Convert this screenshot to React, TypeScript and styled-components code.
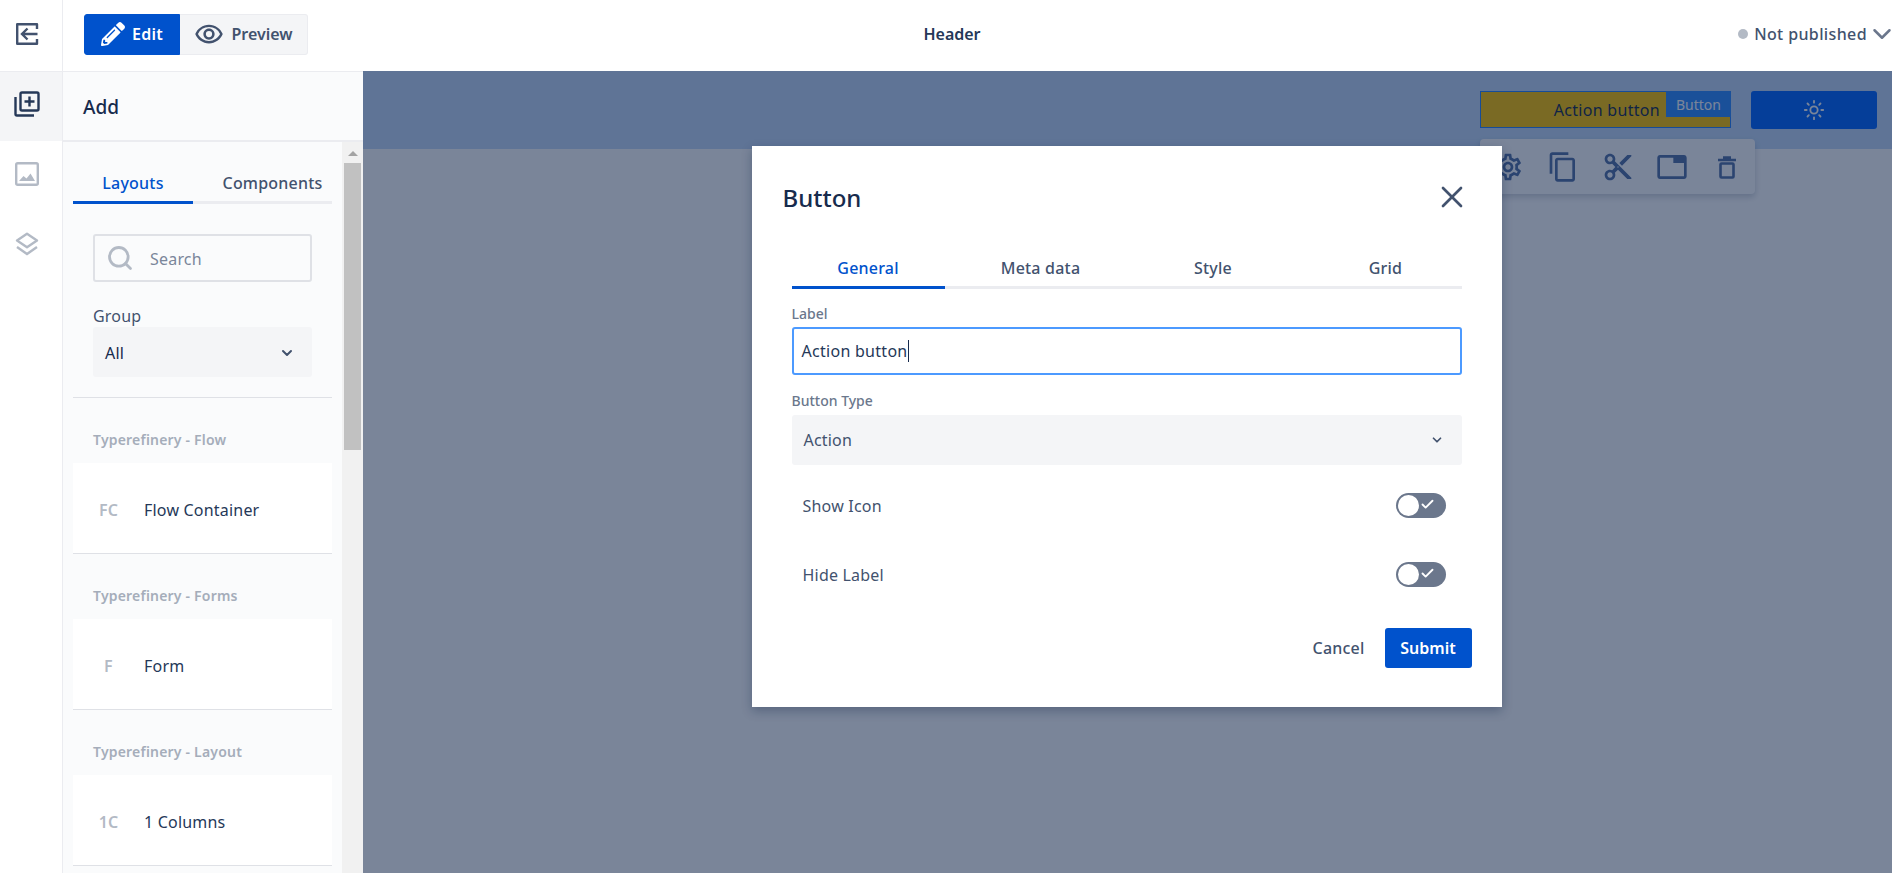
import { ReactNode } from "react";
import styled, { createGlobalStyle } from "styled-components";
import { Check, ChevronDown, Search, Sun, X } from "lucide-react";
import { FaPencilAlt } from "react-icons/fa";
import {
  MdContentCopy,
  MdOutlineContentCut,
  MdOutlineRemoveRedEye,
  MdOutlineSettings,
  MdOutlineTab,
} from "react-icons/md";

const GlobalStyle = createGlobalStyle`
  html, body {
    margin: 0;
    padding: 0;
    height: 100%;
    overflow: hidden;
  }
  * {
    box-sizing: border-box;
  }
  body {
    font-family: "Noto Sans", "Open Sans", sans-serif;
    letter-spacing: 0.2px;
    color: #253858;
    background: #fff;
  }
`;

const Page = styled.div`
  display: flex;
  width: 1892px;
  height: 873px;
  overflow: hidden;
`;

/* left icon rail */
const Rail = styled.nav`
  width: 63px;
  flex-shrink: 0;
  display: flex;
  flex-direction: column;
  border-right: 1px solid #ebecf0;
  background: #fff;
`;
const RailItem = styled.div<{ $active?: boolean; $height: number; $lift: number }>`
  height: ${(p) => p.$height}px;
  display: flex;
  align-items: center;
  justify-content: center;
  padding: 0 9px ${(p) => p.$lift}px 0;
  background: ${(p) => (p.$active ? "#f4f5f7" : "transparent")};
`;
const RailHome = styled(RailItem)`
  border-bottom: 1px solid #ebecf0;
`;

const Main = styled.div`
  flex: 1;
  min-width: 0;
  display: flex;
  flex-direction: column;
`;

/* top bar */
const TopBar = styled.header`
  height: 71px;
  flex-shrink: 0;
  display: grid;
  grid-template-columns: 1fr auto 1fr;
  align-items: center;
  padding: 0 4px 3px 21px;
`;
const ModeSwitch = styled.div`
  display: flex;
  height: 41px;
`;
const ModeButton = styled.div<{ $active?: boolean }>`
  display: flex;
  align-items: center;
  justify-content: center;
  gap: 7px;
  font-size: 16px;
  font-weight: 600;
  letter-spacing: ${(p) => (p.$active ? 0.3 : 0)}px;
  width: ${(p) => (p.$active ? 96 : 128)}px;
  color: ${(p) => (p.$active ? "#fff" : "#42526e")};
  background: ${(p) => (p.$active ? "#0052cc" : "#f4f5f7")};
  border: 1px solid ${(p) => (p.$active ? "#0052cc" : "#ebecf0")};
  border-left-width: ${(p) => (p.$active ? 1 : 0)}px;
  border-radius: ${(p) => (p.$active ? "3px 0 0 3px" : "0 3px 3px 0")};
`;
const PageName = styled.div`
  font-size: 16px;
  font-weight: 600;
  letter-spacing: 0;
  color: #253858;
  margin-right: 68px;
`;
const Publish = styled.div`
  justify-self: end;
  display: flex;
  align-items: center;
  gap: 6px;
  font-size: 16px;
  font-weight: 500;
  letter-spacing: 0.38px;
  color: #42526e;
`;
const Dot = styled.span`
  width: 10px;
  height: 10px;
  border-radius: 50%;
  background: #b3bac5;
`;
const PublishChevron = styled(ChevronDown)`
  margin: 0 -9px 0 -6px;
  color: #6b778c;
`;

const Workspace = styled.div`
  flex: 1;
  min-height: 0;
  display: flex;
`;

/* add panel */
const Panel = styled.aside`
  width: 300px;
  flex-shrink: 0;
  display: flex;
  flex-direction: column;
  background: #fafbfc;
`;
const PanelHeader = styled.div`
  height: 71px;
  flex-shrink: 0;
  display: flex;
  align-items: center;
  padding: 2px 0 0 20px;
  font-size: 19px;
  font-weight: 500;
  letter-spacing: 0;
  color: #172b4d;
  border-top: 1px solid #ebecf0;
  border-bottom: 2px solid #ebecf0;
`;
const PanelBody = styled.div`
  flex: 1;
  min-height: 0;
  display: flex;
`;
const PanelScroll = styled.div`
  flex: 1;
  min-width: 0;
  overflow: hidden;
  padding: 0 10px;
`;
const ScrollTrack = styled.div`
  width: 21px;
  flex-shrink: 0;
  display: flex;
  flex-direction: column;
  align-items: center;
  background: #f1f1f1;
`;
const ScrollArrow = styled.div`
  height: 21px;
  flex-shrink: 0;
  padding-top: 9px;
  &::before {
    content: "";
    display: block;
    width: 0;
    height: 0;
    border-left: 5px solid transparent;
    border-right: 5px solid transparent;
    border-bottom: 5px solid #a3a3a3;
  }
`;
const ScrollThumb = styled.div`
  width: 17px;
  height: 287px;
  background: #c1c1c1;
`;
const PanelTabs = styled.div`
  display: grid;
  grid-template-columns: 120px 139px;
  height: 62px;
  border-bottom: 3px solid #ebecf0;
`;
const PanelTab = styled.div<{ $active?: boolean }>`
  display: flex;
  align-items: flex-end;
  justify-content: center;
  padding: 0 0 7px ${(p) => (p.$active ? 0 : 20)}px;
  font-size: 16px;
  font-weight: 500;
  height: 62px;
  color: ${(p) => (p.$active ? "#0052cc" : "#42526e")};
  border-bottom: 3px solid ${(p) => (p.$active ? "#0052cc" : "transparent")};
`;
const Filters = styled.div`
  padding: 30px 20px 20px;
  border-bottom: 1px solid #dfe1e6;
`;
const SearchBox = styled.div`
  height: 48px;
  display: flex;
  align-items: center;
  gap: 16px;
  padding-left: 11px;
  border: 2px solid #dfe1e6;
  border-radius: 3px;
  font-size: 16px;
  line-height: 24px;
  color: #7a869a;
`;
const SearchText = styled.span`
  padding-top: 2px;
`;
const GroupLabel = styled.div`
  margin-top: 23px;
  font-size: 16px;
  line-height: 22px;
  color: #42526e;
`;
const GroupSelect = styled.div`
  height: 50px;
  display: flex;
  align-items: center;
  justify-content: space-between;
  padding: 2px 17px 0 12px;
  background: #f4f5f7;
  border-radius: 3px;
  font-size: 16px;
  color: #172b4d;
`;
const SectionLabel = styled.div`
  height: 65px;
  padding: 31px 0 0 20px;
  font-size: 14px;
  line-height: 22px;
  font-weight: 600;
  color: #a5adba;
`;
const Card = styled.div`
  height: 91px;
  display: flex;
  align-items: center;
  padding-top: 4px;
  background: #fff;
  border-bottom: 1px solid #dfe1e6;
`;
const CardMark = styled.div`
  width: 71px;
  flex-shrink: 0;
  padding: 0 26px;
  display: flex;
  justify-content: center;
  font-size: 16px;
  font-weight: 600;
  color: #b3bac5;
`;
const CardName = styled.div`
  font-size: 16px;
  color: #253858;
`;

/* canvas behind the dialog */
const Canvas = styled.main`
  flex: 1;
  min-width: 0;
  position: relative;
  background: #fff;
`;
const CanvasHeader = styled.div`
  height: 78px;
  display: flex;
  justify-content: flex-end;
  align-items: flex-start;
  gap: 20px;
  padding: 20px 15px 0 0;
  background: #c4dbf8;
`;
const SelectedButton = styled.div`
  position: relative;
  width: 251px;
  height: 37px;
  display: flex;
  align-items: center;
  justify-content: flex-end;
  padding-right: 70px;
  font-size: 16px;
  letter-spacing: 0.3px;
  color: #172b4d;
  background: #ffc400;
  border: 1px solid #2684ff;
`;
const SelectedTag = styled.span`
  position: absolute;
  top: -1px;
  right: -1px;
  width: 65px;
  height: 26px;
  display: flex;
  align-items: center;
  justify-content: center;
  font-size: 14px;
  letter-spacing: 0;
  color: #fff;
  background: #2f8cff;
`;
const ThemeButton = styled.div`
  width: 126px;
  height: 38px;
  display: flex;
  align-items: center;
  justify-content: center;
  color: #fff;
  background: #0065ff;
  border-radius: 3px;
`;
const NodeToolbar = styled.div`
  position: absolute;
  left: 1117px;
  top: 68px;
  width: 275px;
  height: 55px;
  display: flex;
  align-items: center;
  justify-content: space-between;
  padding: 0 12px;
  color: #5371a6;
  background: #fff;
  border-radius: 4px;
  box-shadow: 0 3px 6px rgba(9, 30, 66, 0.2);
`;
const ToolIcon = styled.span`
  width: 32px;
  height: 32px;
  display: flex;
  align-items: center;
  justify-content: center;
`;

/* dialog */
const Overlay = styled.div`
  position: absolute;
  inset: 0;
  display: flex;
  justify-content: center;
  align-items: flex-start;
  padding: 75px 2px 0 0;
  background: rgba(9, 30, 66, 0.54);
`;
const Dialog = styled.section`
  width: 750px;
  height: 561px;
  background: #fff;
  box-shadow: 0 4px 10px rgba(9, 30, 66, 0.3);
  padding: 0 30px 0 31px;
  display: flex;
  flex-direction: column;
`;
const DialogHeader = styled.div`
  height: 105px;
  display: flex;
  align-items: center;
  justify-content: space-between;
  padding: 0 2px 3px 0;
`;
const DialogTitle = styled.h2`
  margin: 0;
  font-size: 24px;
  font-weight: 500;
  letter-spacing: 0;
  color: #172b4d;
`;
const DialogBody = styled.div`
  padding: 0 10px 0 9px;
`;
const DialogTabs = styled.div`
  display: grid;
  grid-template-columns: repeat(4, 153px);
  column-gap: 19.5px;
  height: 38px;
  border-bottom: 3px solid #ebecf0;
`;
const DialogTab = styled.div<{ $active?: boolean }>`
  height: 38px;
  display: flex;
  justify-content: center;
  font-size: 16px;
  line-height: 35px;
  font-weight: 500;
  color: ${(p) => (p.$active ? "#0052cc" : "#42526e")};
  border-bottom: 3px solid ${(p) => (p.$active ? "#0052cc" : "transparent")};
`;
const FieldLabel = styled.div`
  font-size: 14px;
  line-height: 20px;
  font-weight: 500;
  letter-spacing: 0;
  color: #6b778c;
`;
const LabelField = styled.div`
  padding-top: 15px;
`;
const TextBox = styled.div`
  height: 48px;
  margin-top: 3px;
  display: flex;
  align-items: center;
  padding-left: 8px;
  font-size: 16px;
  letter-spacing: 0.28px;
  color: #253858;
  border: 2px solid #4c9aff;
  border-radius: 3px;
`;
const Caret = styled.span`
  width: 1px;
  height: 22px;
  background: #172b4d;
`;
const TypeField = styled.div`
  padding-top: 16px;
`;
const TypeSelect = styled.div`
  height: 50px;
  margin-top: 4px;
  display: flex;
  align-items: center;
  justify-content: space-between;
  padding: 0 18px 0 12px;
  font-size: 16px;
  color: #42526e;
  background: #f4f5f7;
  border-radius: 3px;
`;
const ToggleRow = styled.div`
  height: 69px;
  display: flex;
  align-items: center;
  justify-content: space-between;
  padding: 0 16px 0 11px;
  font-size: 16px;
  color: #42526e;
`;
const ToggleList = styled.div`
  padding-top: 6px;
`;
const Toggle = styled.div`
  position: relative;
  width: 50px;
  height: 25px;
  display: flex;
  align-items: center;
  justify-content: flex-end;
  padding: 0 11px 3px 0;
  color: #fff;
  background: #6b778c;
  border-radius: 13px;
`;
const ToggleKnob = styled.span`
  position: absolute;
  left: 2px;
  top: 2px;
  width: 21px;
  height: 21px;
  background: #fff;
  border-radius: 50%;
`;
const DialogActions = styled.div`
  margin-top: 19px;
  display: flex;
  justify-content: flex-end;
  align-items: center;
  gap: 20px;
`;
const CancelButton = styled.div`
  font-size: 16px;
  font-weight: 500;
  color: #42526e;
`;
const SubmitButton = styled.div`
  width: 87px;
  height: 40px;
  display: flex;
  align-items: center;
  justify-content: center;
  font-size: 16px;
  font-weight: 600;
  letter-spacing: 0;
  color: #fff;
  background: #0052cc;
  border-radius: 3px;
`;

function ExitIcon() {
  return (
    <svg width="24" height="24" viewBox="0 0 24 24" fill="none" stroke="#42526e" strokeWidth="2.4">
      <path d="M22 7V2.2H2.2v19.6H22V17" strokeLinejoin="round" />
      <path d="M22.5 12H7.5M12.5 6.5L7 12l5.5 5.5" />
    </svg>
  );
}

function AddLayerIcon() {
  return (
    <svg width="26" height="26" viewBox="0 0 26 26" fill="none" stroke="#253858" strokeWidth="2.4">
      <rect x="6.5" y="1.5" width="18" height="18" rx="1.5" />
      <path d="M1.5 6v17a1.5 1.5 0 0 0 1.5 1.5h17" />
      <path d="M15.5 5.5v10M10.5 10.5h10" />
    </svg>
  );
}

function ImageIcon() {
  return (
    <svg width="24" height="24" viewBox="0 0 24 24" fill="none">
      <rect x="1.2" y="1.2" width="21.6" height="21.6" rx="1.5" stroke="#b3bac5" strokeWidth="2.4" />
      <path d="M4 19l4.5-5 3 2.5 4-5L20 19z" fill="#b3bac5" />
    </svg>
  );
}

function LayersIcon() {
  return (
    <svg width="24" height="24" viewBox="0 0 24 24" fill="none" stroke="#b3bac5" strokeWidth="2.4">
      <path d="M12 1.8L22 8.5 12 15.2 2 8.5z" strokeLinejoin="round" />
      <path d="M2 15l10 7 10-7" />
    </svg>
  );
}

function TrashIcon() {
  return (
    <svg width="28" height="28" viewBox="0 0 28 28" fill="none" stroke="#5371a6" strokeWidth="2.6">
      <path d="M5 7h18M10 4.5h8" />
      <rect x="7.5" y="10.5" width="13" height="14" rx="1" />
    </svg>
  );
}

const toolbarIcons: ReactNode[] = [
  <MdOutlineSettings key="settings" size={32} />,
  <MdContentCopy key="copy" size={34} />,
  <MdOutlineContentCut key="cut" size={34} />,
  <MdOutlineTab key="tab" size={34} />,
  <TrashIcon key="trash" />,
];

const sections = [
  { group: "Typerefinery - Flow", mark: "FC", name: "Flow Container" },
  { group: "Typerefinery - Forms", mark: "F", name: "Form" },
  { group: "Typerefinery - Layout", mark: "1C", name: "1 Columns" },
];

export default function App() {
  return (
    <Page>
      <GlobalStyle />
      <Rail>
        <RailHome $height={72} $lift={4}>
          <ExitIcon />
        </RailHome>
        <RailItem $height={69} $lift={5} $active>
          <AddLayerIcon />
        </RailItem>
        <RailItem $height={69} $lift={3}>
          <ImageIcon />
        </RailItem>
        <RailItem $height={69} $lift={2}>
          <LayersIcon />
        </RailItem>
      </Rail>
      <Main>
        <TopBar>
          <ModeSwitch>
            <ModeButton $active>
              <FaPencilAlt size={24} />
              Edit
            </ModeButton>
            <ModeButton>
              <MdOutlineRemoveRedEye size={30} />
              Preview
            </ModeButton>
          </ModeSwitch>
          <PageName>Header</PageName>
          <Publish>
            <Dot />
            Not published
            <PublishChevron size={30} strokeWidth={2} />
          </Publish>
        </TopBar>
        <Workspace>
          <Panel>
            <PanelHeader>Add</PanelHeader>
            <PanelBody>
              <PanelScroll>
                <PanelTabs>
                  <PanelTab $active>Layouts</PanelTab>
                  <PanelTab>Components</PanelTab>
                </PanelTabs>
                <Filters>
                  <SearchBox>
                    <Search size={28} color="#b3bac5" strokeWidth={2.4} />
                    <SearchText>Search</SearchText>
                  </SearchBox>
                  <GroupLabel>Group</GroupLabel>
                  <GroupSelect>
                    All
                    <ChevronDown size={16} color="#42526e" strokeWidth={3} />
                  </GroupSelect>
                </Filters>
                {sections.map((s) => (
                  <div key={s.group}>
                    <SectionLabel>{s.group}</SectionLabel>
                    <Card>
                      <CardMark>{s.mark}</CardMark>
                      <CardName>{s.name}</CardName>
                    </Card>
                  </div>
                ))}
              </PanelScroll>
              <ScrollTrack>
                <ScrollArrow />
                <ScrollThumb />
              </ScrollTrack>
            </PanelBody>
          </Panel>
          <Canvas>
            <CanvasHeader>
              <SelectedButton>
                Action button
                <SelectedTag>Button</SelectedTag>
              </SelectedButton>
              <ThemeButton>
                <Sun size={22} />
              </ThemeButton>
            </CanvasHeader>
            <NodeToolbar>
              {toolbarIcons.map((icon, i) => (
                <ToolIcon key={i}>{icon}</ToolIcon>
              ))}
            </NodeToolbar>
            <Overlay>
              <Dialog>
                <DialogHeader>
                  <DialogTitle>Button</DialogTitle>
                  <X size={36} color="#42526e" strokeWidth={1.8} />
                </DialogHeader>
                <DialogBody>
                  <DialogTabs>
                    <DialogTab $active>General</DialogTab>
                    <DialogTab>Meta data</DialogTab>
                    <DialogTab>Style</DialogTab>
                    <DialogTab>Grid</DialogTab>
                  </DialogTabs>
                  <LabelField>
                    <FieldLabel>Label</FieldLabel>
                    <TextBox>
                      Action button
                      <Caret />
                    </TextBox>
                  </LabelField>
                  <TypeField>
                    <FieldLabel>Button Type</FieldLabel>
                    <TypeSelect>
                      Action
                      <ChevronDown size={14} color="#42526e" strokeWidth={3} />
                    </TypeSelect>
                  </TypeField>
                  <ToggleList>
                    <ToggleRow>
                      Show Icon
                      <Toggle>
                        <ToggleKnob />
                        <Check size={15} strokeWidth={3} />
                      </Toggle>
                    </ToggleRow>
                    <ToggleRow>
                      Hide Label
                      <Toggle>
                        <ToggleKnob />
                        <Check size={15} strokeWidth={3} />
                      </Toggle>
                    </ToggleRow>
                  </ToggleList>
                </DialogBody>
                <DialogActions>
                  <CancelButton>Cancel</CancelButton>
                  <SubmitButton>Submit</SubmitButton>
                </DialogActions>
              </Dialog>
            </Overlay>
          </Canvas>
        </Workspace>
      </Main>
    </Page>
  );
}
